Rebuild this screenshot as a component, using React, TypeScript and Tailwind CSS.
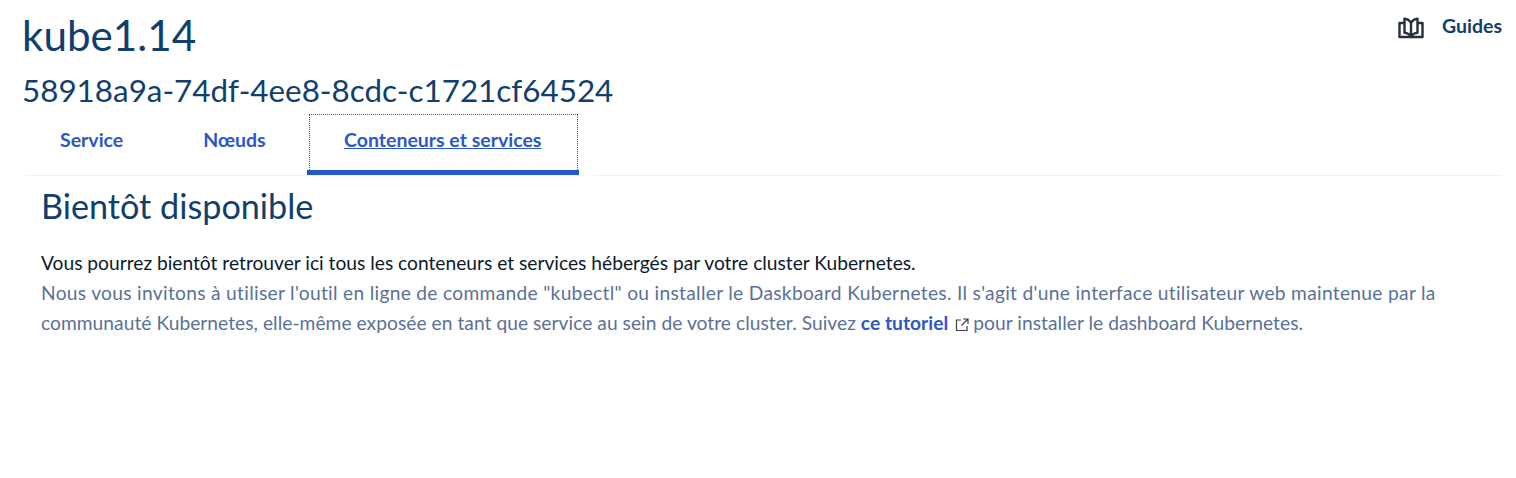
const font = "font-['Lato',sans-serif]"

function GuideIcon() {
  return (
    <svg width="26" height="22" viewBox="0 0 26 22" fill="none" stroke="#282f3a" strokeWidth="2.4" strokeLinejoin="round">
      <path d="M6.500 6H1.500v14h23V6h-5" />
      <path d="M13 6C11.500 3.500 9.500 2 6.500 1.800v14c3 .2 5 1.200 6.500 4.200 1.500-3 3.500-4 6.500-4.200v-14C16.500 2 14.500 3.500 13 6zM13 6v14" />
    </svg>
  )
}

function ExternalIcon() {
  return (
    <svg width="14" height="14" viewBox="0 0 14 14" fill="none" stroke="#3a3f4a" strokeWidth="1.2" className="inline-block ml-[7px] mr-[4px] align-[-2px]">
      <path d="M6 2H1.500v10.500H12V8" />
      <path d="M8 1h5v5M13 1 6.500 7.500" />
    </svg>
  )
}

export default function App() {
  return (
    <div className={`${font} w-[1516px] h-[478px] bg-white overflow-hidden px-[22px]`}>
      <div className="flex items-start justify-between">
        <div>
          <h1 className="text-[42.200px] leading-[50px] mt-[10px] text-[#113f6d]">kube1.14</h1>
          <h2 className="text-[31.400px] leading-[40px] mt-[10px] text-[#113f6d]">58918a9a-74df-4ee8-8cdc-c1721cf64524</h2>
        </div>
        <div className="flex items-center gap-[18px] mt-[15px] -mr-[8px]">
          <GuideIcon />
          <span className="text-[19.500px] leading-[22px] font-bold text-[#113f6d] mb-[4px]">Guides</span>
        </div>
      </div>

      <div className="flex ml-[3px] mr-[-8px] mt-[4px] h-[62px]">
        <div className="flex border-b border-[#eef1f6]">
          <div className="pl-[35px] pr-[40px] pt-[14px] text-[19.500px] leading-[24px] font-bold text-[#2b57c8]">Service</div>
          <div className="pl-[40px] pr-[41px] pt-[14px] text-[19.500px] leading-[24px] font-bold text-[#2b57c8]">Nœuds</div>
          <div className="w-[272px] h-[61px] border-b-[5px] border-[#2456cc] relative pt-[14px] text-center text-[19.500px] leading-[24px] font-bold text-[#2b57c8]">
            <div className="absolute left-[2px] right-[1px] top-0 bottom-0 border border-dotted border-[#2456cc] border-b-0" />
            <span className="underline">Conteneurs et services</span>
          </div>
        </div>
        <div className="w-[14px]" />
        <div className="flex-1 border-b border-[#eef1f6]" />
      </div>

      <div className="pl-[19px] pr-[10px]">
        <h3 className="text-[34.200px] leading-[40px] mt-[10px] text-[#113f6d]">Bientôt disponible</h3>
        <div className="mt-[22px] text-[19.200px] leading-[30px] text-[#5a7196]">
          <p className="text-[#0b1a2b]">Vous pourrez bientôt retrouver ici tous les conteneurs et services hébergés par votre cluster Kubernetes.</p>
          <p className="tracking-[0.04px]">
            <span className="tracking-[0.3px]">Nous vous invitons à utiliser l'outil en ligne de commande "kubectl" ou installer le Daskboard Kubernetes. Il s'agit d'une interface utilisateur web maintenue par la</span>{" "}
            communauté Kubernetes, elle-même exposée en tant que service au sein de votre cluster. Suivez{" "}
            <span className="font-bold text-[#2b57c8]">ce tutoriel</span>
            <ExternalIcon />
            pour installer le dashboard Kubernetes.
          </p>
        </div>
      </div>
    </div>
  )
}
